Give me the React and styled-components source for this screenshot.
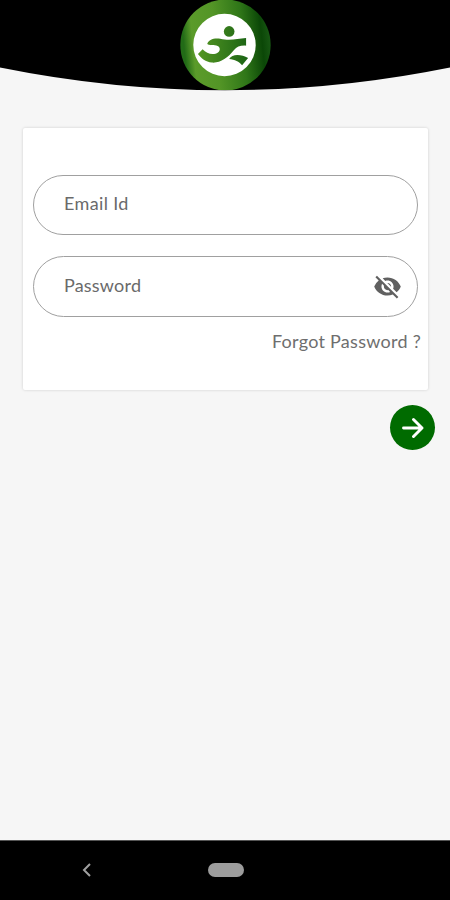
import React, { useState } from 'react';
import styled, { createGlobalStyle } from 'styled-components';
import { MdVisibility, MdVisibilityOff } from 'react-icons/md';

const GlobalStyle = createGlobalStyle`
    * {
        box-sizing: border-box;
    }

    body {
        margin: 0;
        background: #f6f6f6;
        font-family: Lato, 'Liberation Sans', sans-serif;
    }
`;

const Screen = styled.div`
    display: flex;
    flex-direction: column;
    height: 900px;
    overflow: hidden;
`;

const Header = styled.header`
    display: grid;
    justify-items: center;
    height: 91px;

    > svg {
        grid-area: 1 / 1;
    }
`;

const Form = styled.form`
    flex: 1;
    display: flex;
    flex-direction: column;
    padding: 37px 15px 0 23px;
`;

const Card = styled.div`
    display: flex;
    flex-direction: column;
    gap: 21px;
    width: 405px;
    height: 262px;
    padding: 47px 10px 0;
    background: #fff;
    border-radius: 2px;
    box-shadow: 0 0 3px rgba(0, 0, 0, 0.17);
`;

const Field = styled.label`
    display: flex;
    align-items: center;
    height: ${props => props.$height}px;
    padding: 0 15px 0 30px;
    border: 1px solid #a0a0a0;
    border-radius: 31px;
`;

const Input = styled.input`
    flex: 1;
    min-width: 0;
    padding: 0 0 ${props => props.$lift}px;
    border: none;
    outline: none;
    background: none;
    color: #555;
    font: 18px Lato, 'Liberation Sans', sans-serif;
    letter-spacing: ${props => props.$spacing}px;

    &::placeholder {
        color: #6a6a6a;
        opacity: 1;
    }
`;

const IconButton = styled.button`
    display: flex;
    padding: 0;
    border: none;
    background: none;
    color: #606060;
    font-size: 29px;
`;

const Forgot = styled.a`
    align-self: flex-end;
    margin: -9px -3px 0 0;
    color: #6e6e6e;
    font-size: 18px;
    line-height: 24px;
    letter-spacing: 0.27px;
    text-decoration: none;
    white-space: nowrap;
`;

const Submit = styled.button`
    display: flex;
    align-items: center;
    justify-content: center;
    align-self: flex-end;
    width: 45px;
    height: 45px;
    margin-top: 15px;
    padding: 0;
    border: none;
    border-radius: 50%;
    background: #006b00;
    color: #fff;
`;

const NavBar = styled.nav`
    display: grid;
    grid-template-columns: 1fr 36px 1fr;
    align-items: center;
    height: 60px;
    padding: 0 0 1px 1px;
    border-top: 1px solid #555;
    background: #000;
`;

const BackIcon = styled.svg`
    margin-left: 81px;
`;

const HomePill = styled.div`
    height: 14px;
    border-radius: 7px;
    background: #9c9c9c;
`;

function Logo () {
    return (
        <svg width="91" height="90" viewBox="30 0 274 270">
            <defs>
                <linearGradient id="ring" x1="0" x2="1" y1="0.1" y2="0">
                    <stop offset="0" stopColor="#226b17" />
                    <stop offset="0.1" stopColor="#5b9b2a" />
                    <stop offset="0.35" stopColor="#539526" />
                    <stop offset="0.65" stopColor="#2f7618" />
                    <stop offset="0.86" stopColor="#0b4707" />
                    <stop offset="1" stopColor="#1f611a" />
                </linearGradient>
                <linearGradient id="figure" x1="84" x2="235" y1="0" y2="0" gradientUnits="userSpaceOnUse">
                    <stop offset="0" stopColor="#559723" />
                    <stop offset="1" stopColor="#1b6414" />
                </linearGradient>
            </defs>
            <ellipse cx="167" cy="135" rx="136" ry="137" fill="url(#ring)" />
            <circle cx="164" cy="135" r="94" fill="#fff" />
            <g fill="url(#figure)">
                <circle cx="178" cy="94" r="16" />
                <path d="M112 132 C115 119 132 113 151 116 C180 123 202 116 229 114 V137 C211 136 202 140 192 151 C174 174 151 190 126 188 C107 186 94 175 84 162 L98 148 C109 159 123 165 137 161 C149 157 153 148 147 140 C138 132 124 139 112 132 Z" />
                <path d="M178 177 C187 160 216 163 235 174 L217 196 C208 184 195 179 178 177 Z" />
            </g>
        </svg>
    )
}

function App () {
    const [hidden, setHidden] = useState(true);

    return (
        <Screen>
            <GlobalStyle />
            <Header>
                <svg width="450" height="91" viewBox="0 0 450 91">
                    <path d="M0 0 H450 V67.5 Q225 113 0 67.5 Z" />
                </svg>
                <Logo />
            </Header>
            <Form onSubmit={(event) => event.preventDefault()}>
                <Card>
                    <Field $height={60}>
                        <Input type="text" placeholder="Email Id" $spacing={0.36} $lift={5} />
                    </Field>
                    <Field $height={61}>
                        <Input type={hidden ? 'password' : 'text'} placeholder="Password" $spacing={0.2} $lift={4} />
                        <IconButton type="button" onClick={() => setHidden(!hidden)}>
                            {hidden ? <MdVisibilityOff /> : <MdVisibility />}
                        </IconButton>
                    </Field>
                    <Forgot href="#">Forgot Password ?</Forgot>
                </Card>
                <Submit>
                    <svg width="22" height="22" viewBox="0 0 22 22" fill="none" stroke="currentColor" strokeWidth="2.9" strokeLinecap="round" strokeLinejoin="round">
                        <path d="M1.5 11 H20 M11.5 2.5 L20 11 L11.5 19.5" />
                    </svg>
                </Submit>
            </Form>
            <NavBar>
                <BackIcon width="9" height="14" viewBox="0 0 9 14" fill="none" stroke="#a0a0a0" strokeWidth="2">
                    <path d="M8 1 L2 7 L8 13" />
                </BackIcon>
                <HomePill />
            </NavBar>
        </Screen>
    )
}

export default App
